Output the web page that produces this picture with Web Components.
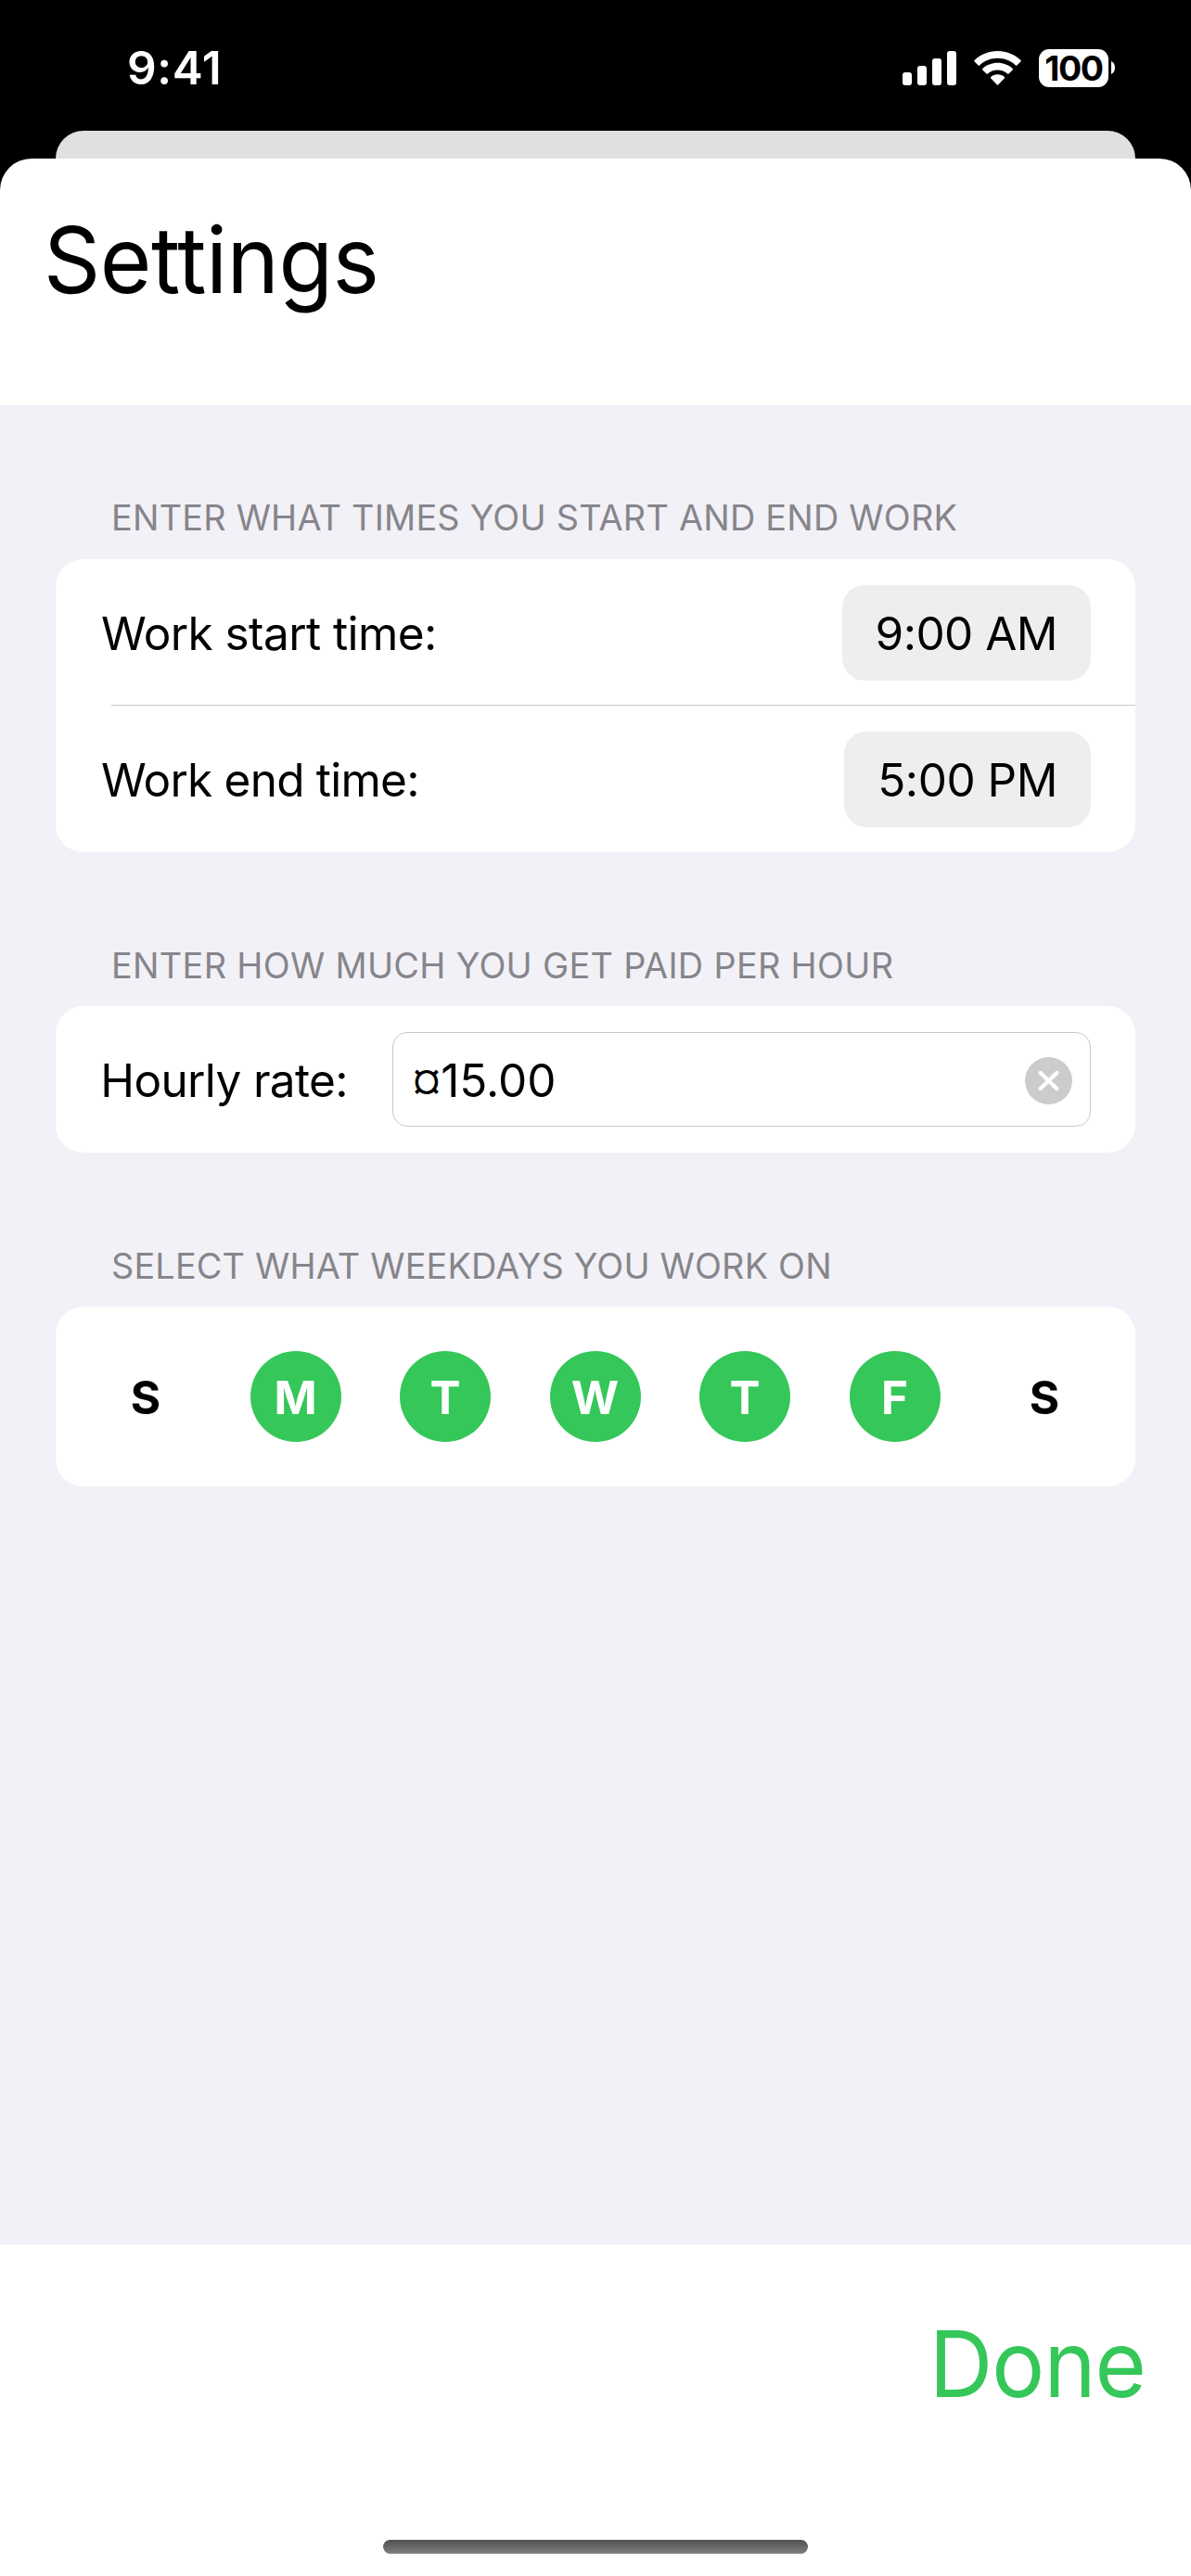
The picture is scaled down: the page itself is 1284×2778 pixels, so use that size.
<!DOCTYPE html>
<html lang="en">
<head>
<meta charset="utf-8">
<title>Settings</title>
<style>
  html, body { margin: 0; background: #000; }
  body { width: 1284px; height: 2778px; overflow: hidden; font-family: Inter, "Liberation Sans", sans-serif; }
</style>
</head>
<body>
<settings-app></settings-app>
<script>
const define = (name, html) => customElements.define(name, class extends HTMLElement {
  constructor() {
    super();
    this.attachShadow({ mode: "open" }).innerHTML = html;
  }
});

define("status-bar", `
<style>
  :host { display: flex; align-items: center; height: 141px; box-sizing: border-box; padding: 5px 82px 0 137px; color: #fff; }
  .time { font-size: 49.5px; font-weight: 600; line-height: 60px; letter-spacing: .6px; flex: 1; }
  svg { display: block; }
  .bars { margin-right: 19px; }
  .wifi { margin-right: 19px; }
  .battery { display: flex; align-items: center; gap: 3px; }
  .level { width: 75px; height: 41px; border-radius: 11px; background: #fff; color: #000; font-size: 37.5px; font-weight: 700; line-height: 41px; text-align: center; letter-spacing: -1.4px; }
</style>
<div class="time">9:41</div>
<svg class="bars" width="58" height="37" viewBox="0 0 58 37" fill="#fff"><rect y="23" width="10" height="14" rx="3"/><rect x="16" y="16" width="10" height="21" rx="3"/><rect x="32" y="8" width="10" height="29" rx="3"/><rect x="48" width="10" height="37" rx="3"/></svg>
<svg class="wifi" width="51" height="37" viewBox="0 0 51 37" fill="#fff"><path d="M25.5 0C35 0 44 3.700 50.500 10Q51 10.700 50.400 11.400L46.300 15.400Q45.600 16 44.900 15.400C39.600 10.500 32.700 7.800 25.500 7.800S11.400 10.500 6.100 15.400Q5.400 16 4.700 15.400L.6 11.400Q0 10.700.5 10C7 3.700 16 0 25.500 0Z"/><path d="M25.500 12.800C31.700 12.800 37.400 15.100 41.700 19Q42.300 19.700 41.700 20.400L37.500 24.500Q36.800 25.100 36.100 24.500C33.200 22 29.500 20.600 25.500 20.600S17.800 22 14.900 24.500Q14.200 25.100 13.500 24.500L9.300 20.400Q8.700 19.700 9.300 19C13.600 15.100 19.300 12.800 25.500 12.800Z"/><path d="M25.500 25.300C28.300 25.300 30.900 26.300 32.900 27.900Q33.500 28.600 32.900 29.300L26.300 36.300Q25.500 37 24.700 36.300L18.100 29.300Q17.500 28.600 18.100 27.900C20.100 26.300 22.700 25.300 25.500 25.300Z"/></svg>
<div class="battery"><div class="level">100</div><svg width="4" height="14" viewBox="0 0 4 14" fill="#fff"><path d="M0 0Q4 2 4 7T0 14Z"/></svg></div>
`);

define("form-section", `
<style>
  :host { display: block; padding: 0 60px; }
  .title { padding-left: 60px; font-size: 37.8px; line-height: 46px; color: #86858b; white-space: nowrap; margin-bottom: var(--title-gap, 21px); }
  .card { background: #fff; border-radius: 30px; overflow: hidden; }
</style>
<div class="title"><slot name="title"></slot></div>
<div class="card"><slot></slot></div>
`);

define("form-row", `
<style>
  :host { display: flex; align-items: flex-start; justify-content: space-between; box-sizing: border-box; height: 158px; padding: 28px 48px 0 49px; font-size: 49.5px; line-height: 105px; color: #000; white-space: nowrap; }
</style>
<div><slot name="label"></slot></div>
<slot></slot>
`);

define("row-divider", `<style>:host { display: block; height: 1px; margin: -1px 0 0 60px; background: #c6c6c8; }</style>`);

define("time-pill", `
<style>
  :host { display: block; box-sizing: border-box; width: 268px; height: 103px; padding-right: 36px; border-radius: 24px; background: #eeeeef; text-align: right; letter-spacing: -.53px; }
  :host([narrow]) { width: 266px; letter-spacing: -.47px; }
</style>
<slot></slot>
`);

define("rate-field", `
<style>
  :host { display: flex; align-items: center; justify-content: space-between; width: 753px; height: 102px; box-sizing: border-box; border: 1px solid #c9c9cb; border-radius: 16px; padding: 3px 19px 0 20.7px; line-height: 60px; }
  .value { margin-top: -1px; }
  .sign { font-size: 42px; line-height: 0; vertical-align: 2.7px; }
  svg { display: block; }
</style>
<div class="value"><span class="sign"><slot name="sign"></slot></span><slot></slot></div>
<svg width="51" height="51" viewBox="0 0 51 51"><circle cx="25.5" cy="25.5" r="25.5" fill="#ccc"/><path d="M16.7 17 34.3 34M34.3 17 16.7 34" stroke="#fff" stroke-width="4.4" stroke-linecap="round"/></svg>
`);

define("week-picker", `
<style>:host { display: flex; justify-content: space-between; padding: 48px 49px 48px 48px; }</style>
<slot></slot>
`);

define("week-day", `
<style>
  :host { display: block; width: 98px; height: 98px; line-height: 100px; border-radius: 50%; text-align: center; font-size: 49.5px; font-weight: 700; color: #000; }
  :host([on]) { background: #35c759; color: #fff; }
</style>
<slot></slot>
`);

define("home-indicator", `<style>:host { display: block; width: 458px; height: 15px; border-radius: 7.5px; background: linear-gradient(#505050, #808080); }</style>`);

define("settings-app", `
<style>
  :host { display: flex; flex-direction: column; width: 1284px; height: 2778px; background: #000; }
  .behind { height: 75px; margin: 0 60px -45px; border-radius: 30px 30px 0 0; background: #e0e0e0; }
  .sheet { flex: 1; display: flex; flex-direction: column; border-radius: 34px 34px 0 0; background: #fff; position: relative; overflow: hidden; }
  h1 { margin: 0; height: 266px; box-sizing: border-box; padding: 49px 0 0 46.7px; font-size: 99px; font-weight: 400; line-height: 120px; letter-spacing: -.57px; }
  h1 span { display: inline-block; transform: scaleX(.965); transform-origin: left; }
  main { flex: 1; display: flex; flex-direction: column; background: #f2f1f7; padding-top: 98px; gap: 99px; }
  footer { height: 357px; box-sizing: border-box; padding: 68px 0 24px; display: flex; flex-direction: column; justify-content: space-between; align-items: center; }
  .done { align-self: flex-end; margin-right: 49.4px; font-size: 99px; line-height: 120px; color: #35c759; letter-spacing: -1px; transform: scaleX(.96); transform-origin: right; }
</style>
<status-bar></status-bar>
<div class="behind"></div>
<div class="sheet">
  <h1><span>Settings</span></h1>
  <main>
    <form-section style="--title-gap:22px"><span slot="title" style="letter-spacing:.23px">ENTER WHAT TIMES YOU START AND END WORK</span>
      <form-row><span slot="label" style="letter-spacing:-.58px">Work start time:</span><time-pill>9:00 AM</time-pill></form-row>
      <row-divider></row-divider>
      <form-row><span slot="label" style="letter-spacing:-.77px">Work end time:</span><time-pill narrow>5:00 PM</time-pill></form-row>
    </form-section>
    <form-section><span slot="title" style="letter-spacing:.33px">ENTER HOW MUCH YOU GET PAID PER HOUR</span>
      <form-row><span slot="label" style="letter-spacing:-.65px;margin-left:-.7px">Hourly rate:</span><rate-field><span slot="sign">¤</span>15.00</rate-field></form-row>
    </form-section>
    <form-section><span slot="title" style="letter-spacing:.19px">SELECT WHAT WEEKDAYS YOU WORK ON</span>
      <week-picker><week-day>S</week-day><week-day on>M</week-day><week-day on>T</week-day><week-day on>W</week-day><week-day on>T</week-day><week-day on>F</week-day><week-day>S</week-day></week-picker>
    </form-section>
  </main>
  <footer><div class="done">Done</div><home-indicator></home-indicator></footer>
</div>
`);
</script>
</body>
</html>
